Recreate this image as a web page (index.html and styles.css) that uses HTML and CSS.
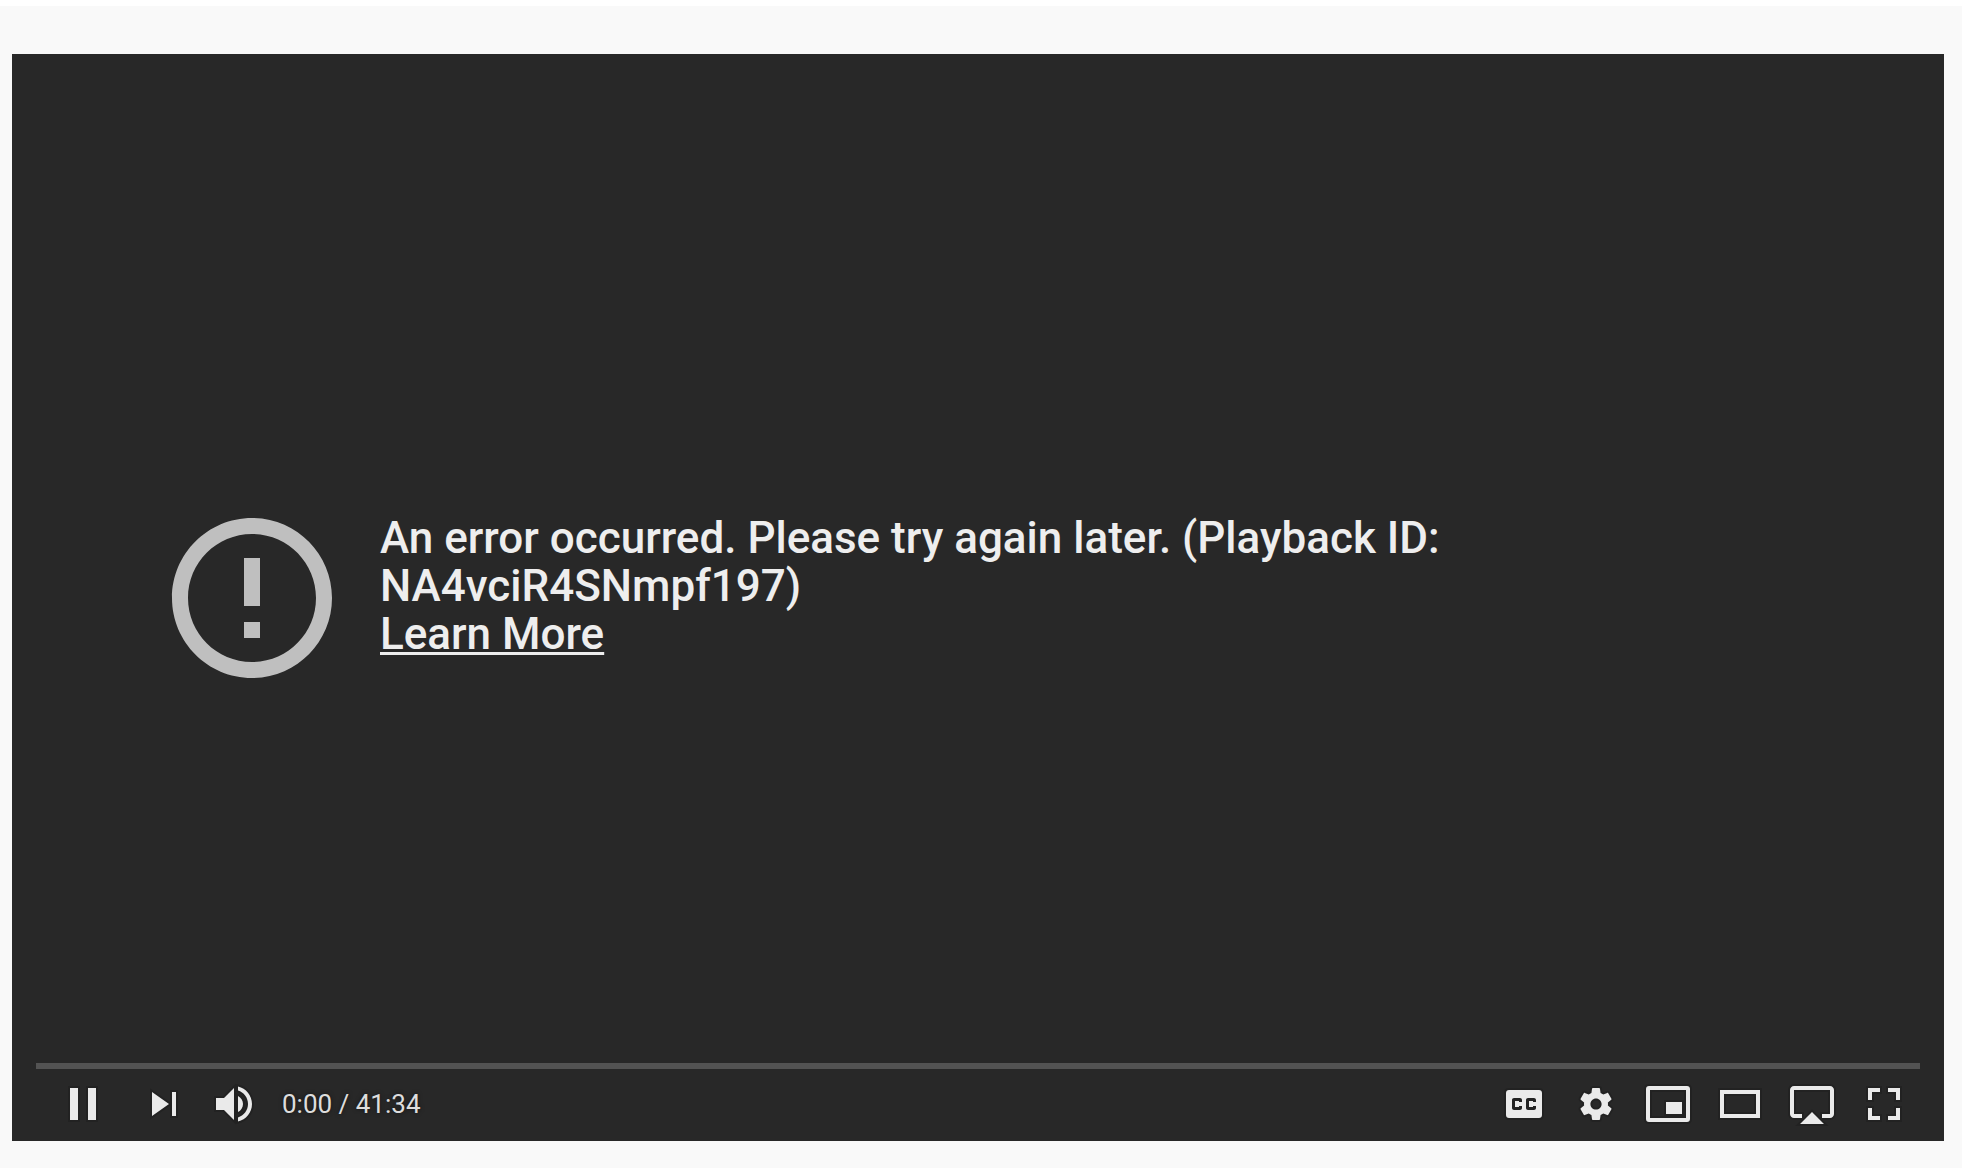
FILE: index.html
```html
<!DOCTYPE html>
<html lang="en">
<head>
  <meta charset="UTF-8" />
  <meta name="viewport" content="width=device-width, initial-scale=1.0"/>
  <title>Video player</title>
  <link rel="stylesheet" href="styles.css">
</head>
<body>
  <main class="player">
    <div class="error">
      <svg class="error-icon" viewBox="0 0 24 24" aria-hidden="true">
        <path d="M11 15h2v2h-2zM11 7h2v6h-2zM12 2C6.48 2 2 6.48 2 12s4.48 10 10 10 10-4.48 10-10S17.52 2 12 2zm0 18c-4.42 0-8-3.58-8-8s3.58-8 8-8 8 3.58 8 8-3.58 8-8 8z"/>
      </svg>
      <div class="error-text">
        An error occurred. Please try again later. (Playback ID: NA4vciR4SNmpf197)<br>
        <a href="#">Learn More</a>
      </div>
    </div>

    <div class="chrome">
      <input class="progress" type="range" min="0" max="2494" value="0" aria-label="Seek">

      <div class="controls">
        <button class="play" aria-label="Pause">
          <svg viewBox="0 0 36 36"><path d="M12,26H16V10H12ZM21,26H25V10H21Z"/></svg>
        </button>
        <button aria-label="Next">
          <svg viewBox="0 0 36 36"><path d="M12,24L20.5,18L12,12ZM22,12V24H24V12Z"/></svg>
        </button>
        <button aria-label="Mute">
          <svg viewBox="0 0 36 36"><path d="M8,21L12,21L17,26L17,10L12,15L8,15ZM19,14L19,22C20.48,21.32 21.5,19.77 21.5,18C21.5,16.26 20.48,14.74 19,14ZM19,11.29C21.89,12.15 24,14.83 24,18C24,21.17 21.89,23.85 19,24.71L19,26.77C23.01,25.86 26,22.28 26,18C26,13.72 23.01,10.14 19,9.23Z"/></svg>
        </button>
        <div class="time">0:00 / 41:34</div>

        <div class="right">
          <button aria-label="Subtitles">
            <svg viewBox="0 0 36 36"><path fill-rule="evenodd" d="M10.5,11C9.6,11 9,11.6 9,12.5L9,23.5C9,24.4 9.6,25 10.5,25L25.5,25C26.4,25 27,24.4 27,23.5L27,12.5C27,11.6 26.4,11 25.5,11ZM17,17L15.5,17L15.5,16.5L13.5,16.5L13.5,19.5L15.5,19.5L15.5,19L17,19L17,20C17,20.55 16.55,21 16,21L13,21C12.45,21 12,20.55 12,20L12,16C12,15.45 12.45,15 13,15L16,15C16.55,15 17,15.45 17,16ZM24,17L22.5,17L22.5,16.5L20.5,16.5L20.5,19.5L22.5,19.5L22.5,19L24,19L24,20C24,20.55 23.55,21 23,21L20,21C19.45,21 19,20.55 19,20L19,16C19,15.45 19.45,15 20,15L23,15C23.55,15 24,15.45 24,16Z"/></svg>
          </button>
          <button aria-label="Settings">
            <svg viewBox="0 0 36 36"><path fill-rule="evenodd" d="m 23.94,18.78 c .03,-0.25 .05,-0.51 .05,-0.78 0,-0.27 -0.02,-0.52 -0.05,-0.78 l 1.68,-1.32 c .15,-0.12 .19,-0.33 .09,-0.51 l -1.6,-2.76 c -0.09,-0.17 -0.31,-0.24 -0.48,-0.17 l -1.99,.8 c -0.41,-0.32 -0.86,-0.58 -1.35,-0.78 l -0.30,-2.12 c -0.02,-0.19 -0.19,-0.33 -0.39,-0.33 l -3.2,0 c -0.2,0 -0.36,.14 -0.39,.33 l -0.30,2.12 c -0.48,.2 -0.93,.47 -1.35,.78 l -1.99,-0.8 c -0.18,-0.07 -0.39,0 -0.48,.17 l -1.6,2.76 c -0.10,.17 -0.05,.39 .09,.51 l 1.68,1.32 c -0.03,.25 -0.05,.52 -0.05,.78 0,.26 .02,.52 .05,.78 l -1.68,1.32 c -0.15,.12 -0.19,.33 -0.09,.51 l 1.6,2.76 c .09,.17 .31,.24 .48,.17 l 1.99,-0.8 c .41,.32 .86,.58 1.35,.78 l .30,2.12 c .02,.19 .19,.33 .39,.33 l 3.2,0 c .2,0 .36,-0.14 .39,-0.33 l .30,-2.12 c .48,-0.2 .93,-0.47 1.35,-0.78 l 1.99,.8 c .18,.07 .39,0 .48,-0.17 l 1.6,-2.76 c .09,-0.17 .05,-0.39 -0.09,-0.51 l -1.68,-1.32 z m -5.94,2.01 c -1.54,0 -2.8,-1.25 -2.8,-2.8 0,-1.54 1.25,-2.8 2.8,-2.8 1.54,0 2.8,1.25 2.8,2.8 0,1.54 -1.25,2.8 -2.8,2.8 z"/></svg>
          </button>
          <button aria-label="Miniplayer">
            <svg viewBox="0 0 36 36"><path fill-rule="evenodd" d="M25,17H17V23H25ZM29,25.5V10.5C29,9.6 28.4,9 27.5,9H8.5C7.6,9 7,9.6 7,10.5V25.5C7,26.4 7.6,27 8.5,27H27.5C28.4,27 29,26.4 29,25.5ZM27,25H9V11H27Z"/></svg>
          </button>
          <button aria-label="Theater mode">
            <svg viewBox="0 0 36 36"><path fill-rule="evenodd" d="M28,11V25H8V11ZM10,13H26V23H10Z"/></svg>
          </button>
          <button aria-label="AirPlay">
            <svg viewBox="0 0 36 36"><path d="M12,28H24L18,22ZM27,9H9C7.9,9 7,9.9 7,11V23C7,24.1 7.9,25 9,25H13V23H9V11H27V23H23V25H27C28.1,25 29,24.1 29,23V11C29,9.9 28.1,9 27,9Z"/></svg>
          </button>
          <button aria-label="Full screen">
            <svg viewBox="0 0 36 36"><path d="M10,16H12V12H16V10H10ZM20,10V12H24V16H26V10ZM24,24H20V26H26V20H24ZM12,20H10V26H16V24H12Z"/></svg>
          </button>
        </div>
      </div>
    </div>
  </main>
</body>
</html>
```
FILE: styles.css
```css
* {
  box-sizing: border-box;
}
body {
  margin: 0;
  padding: 48px 18px 24px 12px;
  border-top: 6px solid #fff;
  background-color: #f9f9f9;
  font-family: Roboto, Arial, sans-serif;
}
.player {
  display: grid;
  aspect-ratio: 16 / 9;
  background-color: #282828;
}
/* message and controls share the same cell */
.error,
.chrome {
  grid-area: 1 / 1;
}
.error {
  display: flex;
  align-self: center;
  gap: 32px;
  padding: 2px 144px 0;
}
.error-icon {
  flex: none;
  width: 192px;
  height: 192px;
  fill: #bfbfbf;
}
.error-text {
  padding-top: 12px;
  color: #eee;
  font-size: 44px;
  font-weight: 500;
  line-height: 48px;
}
.error-text a {
  color: inherit;
  text-decoration-thickness: 3px;
  text-underline-offset: 3px;
}
.chrome {
  align-self: end;
  padding: 0 24px;
}
.progress {
  display: block;
  width: 100%;
  height: 6px;
  margin: 0 0 -1px;
  appearance: none;
  background-color: rgba(255, 255, 255, 0.2);
  cursor: pointer;
}
.progress::-webkit-slider-thumb {
  appearance: none;
  width: 0;
  height: 0;
}
.controls {
  display: flex;
  height: 73px;
  color: #ddd;
}
.controls button {
  width: 72px;
  height: 72px;
  padding: 0;
  border: none;
  background: none;
  cursor: pointer;
}
.controls .play {
  width: 92px;
  padding: 0 10px;
}
.controls svg {
  display: block;
  width: 72px;
  height: 72px;
  fill: #eaeaea;
  stroke: rgba(0, 0, 0, 0.15);
  stroke-width: 2px;
  paint-order: stroke;
}
.time {
  padding: 0 10px;
  font-size: 26px;
  line-height: 72px;
  text-shadow: 0 0 4px rgba(0, 0, 0, 0.5);
  white-space: nowrap;
}
.right {
  display: flex;
  margin-left: auto;
}
```
